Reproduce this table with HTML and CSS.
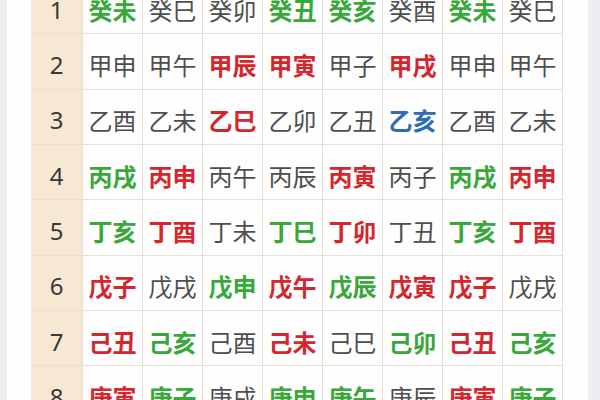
FILE: index.html
```html
<!DOCTYPE html>
<html lang="zh">
<head>
<meta charset="utf-8">
<link rel="stylesheet" href="styles.css">
</head>
<body>
<div class="page">
  <div class="panel">
    <div class="grid">
      <div class="num">1</div>
      <div class="c g">癸未</div><div class="c">癸巳</div><div class="c">癸卯</div><div class="c g">癸丑</div><div class="c g">癸亥</div><div class="c">癸酉</div><div class="c g">癸未</div><div class="c">癸巳</div>
      <div class="num">2</div>
      <div class="c">甲申</div><div class="c">甲午</div><div class="c r">甲辰</div><div class="c r">甲寅</div><div class="c">甲子</div><div class="c r">甲戌</div><div class="c">甲申</div><div class="c">甲午</div>
      <div class="num">3</div>
      <div class="c">乙酉</div><div class="c">乙未</div><div class="c r">乙巳</div><div class="c">乙卯</div><div class="c">乙丑</div><div class="c b">乙亥</div><div class="c">乙酉</div><div class="c">乙未</div>
      <div class="num">4</div>
      <div class="c g">丙戌</div><div class="c r">丙申</div><div class="c">丙午</div><div class="c">丙辰</div><div class="c r">丙寅</div><div class="c">丙子</div><div class="c g">丙戌</div><div class="c r">丙申</div>
      <div class="num">5</div>
      <div class="c g">丁亥</div><div class="c r">丁酉</div><div class="c">丁未</div><div class="c g">丁巳</div><div class="c r">丁卯</div><div class="c">丁丑</div><div class="c g">丁亥</div><div class="c r">丁酉</div>
      <div class="num">6</div>
      <div class="c r">戊子</div><div class="c">戊戌</div><div class="c g">戊申</div><div class="c r">戊午</div><div class="c g">戊辰</div><div class="c r">戊寅</div><div class="c r">戊子</div><div class="c">戊戌</div>
      <div class="num">7</div>
      <div class="c r">己丑</div><div class="c g">己亥</div><div class="c">己酉</div><div class="c r">己未</div><div class="c">己巳</div><div class="c g">己卯</div><div class="c r">己丑</div><div class="c g">己亥</div>
      <div class="num">8</div>
      <div class="c r">庚寅</div><div class="c g">庚子</div><div class="c">庚戌</div><div class="c g">庚申</div><div class="c g">庚午</div><div class="c">庚辰</div><div class="c r">庚寅</div><div class="c g">庚子</div>
    </div>
  </div>
</div>
</body>
</html>
```
FILE: styles.css
```css
html, body {
  margin: 0;
  padding: 0;
  background: #ededf2;
  overflow: hidden;
}
.page {
  width: 600px;
  height: 400px;
  overflow: hidden;
  padding: 0 12px 0 7px;
  box-sizing: border-box;
}
.panel {
  background: #fefefe;
  height: 400px;
  padding-left: 24px;
  overflow: hidden;
}
.grid {
  display: grid;
  grid-template-columns: 52px repeat(8, 60px);
  grid-auto-rows: 55.33px;
  margin-top: -21px;
  width: 532px;
}
.grid > div {
  border-right: 1px solid #e6dfd2;
  border-bottom: 1px solid #e6dfd2;
  display: flex;
  align-items: center;
  justify-content: center;
  padding-top: 6px;
  box-sizing: border-box;
  white-space: nowrap;
}
.num {
  background: #f7e8d3;
  font-family: "Noto Sans", "Liberation Sans", sans-serif;
  font-size: 24px;
  color: #383838;
}
.c {
  background: #fefefe;
  font-family: "Noto Sans CJK SC", sans-serif;
  font-size: 24px;
  color: #4e4e4e;
}
.g { color: #38a83a; font-weight: 700; }
.r { color: #d3272d; font-weight: 700; }
.b { color: #2f6cb4; font-weight: 700; }
```
